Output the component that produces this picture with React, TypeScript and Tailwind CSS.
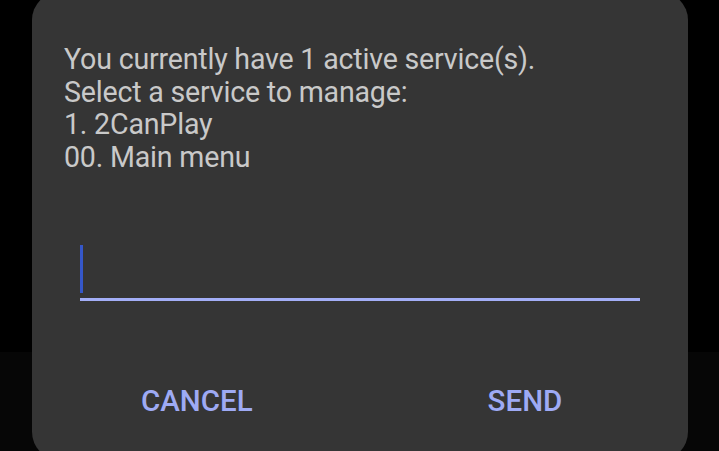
export default function App() {
  const lines = [
    "You currently have 1 active service(s).",
    "Select a service to manage:",
    "1. 2CanPlay",
    "00. Main menu",
  ];

  return (
    <div
      className="relative h-[451px] w-[719px] overflow-hidden bg-black"
      style={{ fontFamily: "Roboto, 'Noto Sans', sans-serif" }}
    >
      {/* lower strip of the screen behind the dialog */}
      <div className="absolute inset-x-0 top-[352px] bottom-0 bg-[#060606]" />

      <div className="absolute left-[32px] top-[-8px] flex h-[468px] w-[656px] flex-col rounded-[28px] bg-[#353535]">
        <div className="pl-[32px] pt-[51px] text-[28.6px] leading-[32.6px] tracking-[-0.2px] text-[#c9c9c9]">
          {lines.map((l) => (
            <div key={l}>{l}</div>
          ))}
        </div>

        <div className="mx-[48px] mt-[68px] h-[60px] border-b-[3px] border-[#a3aef7] pt-[4px]">
          <div className="h-[48px] w-[3px] bg-[#3557c9]" />
        </div>

        <div className="mt-[85px] flex text-[29.5px] font-medium leading-[30px] text-[#9eaaf4]">
          <div className="ml-[109px]">CANCEL</div>
          <div className="ml-[235px]">SEND</div>
        </div>
      </div>
    </div>
  );
}
